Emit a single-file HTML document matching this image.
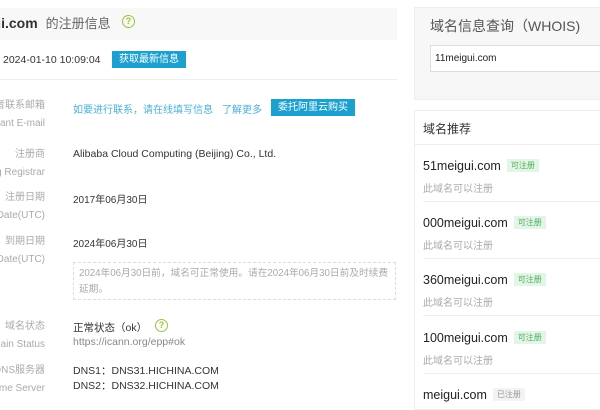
<!DOCTYPE html>
<html><head><meta charset="utf-8"><style>
body{margin:0;width:600px;height:400px;overflow:hidden;background:#fff;font-family:"Liberation Sans","Noto Sans CJK SC",sans-serif;position:relative;color:#333}
.a{position:absolute;white-space:nowrap}
.lab{position:absolute;right:555px;text-align:right;font-size:10px;color:#aaa;line-height:18px;white-space:nowrap}
.v{position:absolute;left:73px;font-size:10px;color:#333;white-space:nowrap}
.btn{position:absolute;background:#1ba0cf;color:#fff;font-size:10px;text-align:center;line-height:17px}
.q{position:absolute;width:11px;height:11px;border:1.5px solid #9dc33b;border-radius:50%;color:#9dc33b;font-size:9px;line-height:11px;text-align:center;font-weight:bold}
.tag{display:inline-block;background:#e3f5e6;color:#4cae5a;font-size:8px;padding:1px 4px;margin-left:6px;vertical-align:2px}
.nm{position:absolute;left:423px;font-size:12.5px;color:#222}
.ds{position:absolute;left:423px;font-size:10px;color:#aaa}
.sep{position:absolute;left:423px;right:0;height:1px;background:#eee}
</style></head><body>
<div class="a" style="left:0;top:8px;width:397px;height:32px;background:#f8f8f8"></div>
<div class="a" style="left:-16px;top:13px;font-size:14px;font-weight:bold;color:#333">gui.com <span style="font-weight:normal;color:#666;font-size:13px;margin-left:4px">的注册信息</span></div>
<div class="q" style="left:122px;top:15px">?</div>
<div class="v" style="left:3px;top:54px;font-size:10.5px">2024-01-10 10:09:04</div>
<div class="btn" style="left:112px;top:51px;width:74px">获取最新信息</div>
<div class="a" style="left:0;top:79px;width:397px;height:1px;background:#eee"></div>

<div class="lab" style="top:97px">者联系邮箱<br>rant E-mail</div>
<div class="v" style="top:101px;color:#4bb0d8">如要进行联系，请在线填写信息</div>
<div class="v" style="left:222px;top:101px;color:#4bb0d8">了解更多</div>
<div class="btn" style="left:271px;top:99px;width:84px;height:17px">委托阿里云购买</div>

<div class="lab" style="top:146px">注册商<br>g Registrar</div>
<div class="v" style="top:148px;font-size:10.5px">Alibaba Cloud Computing (Beijing) Co., Ltd.</div>

<div class="lab" style="top:189px">注册日期<br>Date(UTC)</div>
<div class="v" style="top:191px">2017年06月30日</div>

<div class="lab" style="top:233px">到期日期<br>Date(UTC)</div>
<div class="v" style="top:235px">2024年06月30日</div>
<div class="a" style="left:73px;top:262px;width:323px;height:38px;border:1px dashed #ddd;box-sizing:border-box"></div>
<div class="a" style="left:79px;top:266px;font-size:9.7px;color:#aaa;line-height:16px">2024年06月30日前，域名可正常使用。请在2024年06月30日前及时续费<br>延期。</div>

<div class="lab" style="top:318px">域名状态<br>ain Status</div>
<div class="v" style="top:320px;font-size:10.5px">正常状态（ok）</div>
<div class="q" style="left:155px;top:319px">?</div>
<div class="v" style="top:336px;color:#888;font-size:10.5px">https://icann.org/epp#ok</div>

<div class="lab" style="top:362px">DNS服务器<br>me Server</div>
<div class="v" style="top:364px;line-height:15px;font-size:10.5px">DNS1：DNS31.HICHINA.COM<br>DNS2：DNS32.HICHINA.COM</div>

<div class="a" style="left:414px;top:7px;width:190px;height:93px;background:#f7f7f7;border:1px solid #eee;box-sizing:border-box"></div>
<div class="a" style="left:430px;top:16px;font-size:14px;color:#555">域名信息查询（WHOIS)</div>
<div class="a" style="left:430px;top:45px;width:180px;height:27px;background:#fff;border:1px solid #ddd;box-sizing:border-box"></div>
<div class="a" style="left:435px;top:53px;font-size:10px;color:#222">11meigui.com</div>

<div class="a" style="left:414px;top:110px;width:190px;height:300px;background:#fff;border:1px solid #eee;box-sizing:border-box"></div>
<div class="a" style="left:423px;top:120px;font-size:12px;color:#333">域名推荐</div>
<div class="a" style="left:415px;top:144px;width:190px;height:1px;background:#eee"></div>

<div class="nm" style="top:159px">51meigui.com<span class="tag">可注册</span></div>
<div class="ds" style="top:180px">此域名可以注册</div>
<div class="sep" style="top:201px"></div>
<div class="nm" style="top:216px">000meigui.com<span class="tag">可注册</span></div>
<div class="ds" style="top:237px">此域名可以注册</div>
<div class="sep" style="top:258px"></div>
<div class="nm" style="top:273px">360meigui.com<span class="tag">可注册</span></div>
<div class="ds" style="top:294px">此域名可以注册</div>
<div class="sep" style="top:315px"></div>
<div class="nm" style="top:331px">100meigui.com<span class="tag">可注册</span></div>
<div class="ds" style="top:352px">此域名可以注册</div>
<div class="sep" style="top:373px"></div>
<div class="nm" style="top:388px">meigui.com<span class="tag" style="background:#f3f3f3;color:#999">已注册</span></div>
</body></html>
